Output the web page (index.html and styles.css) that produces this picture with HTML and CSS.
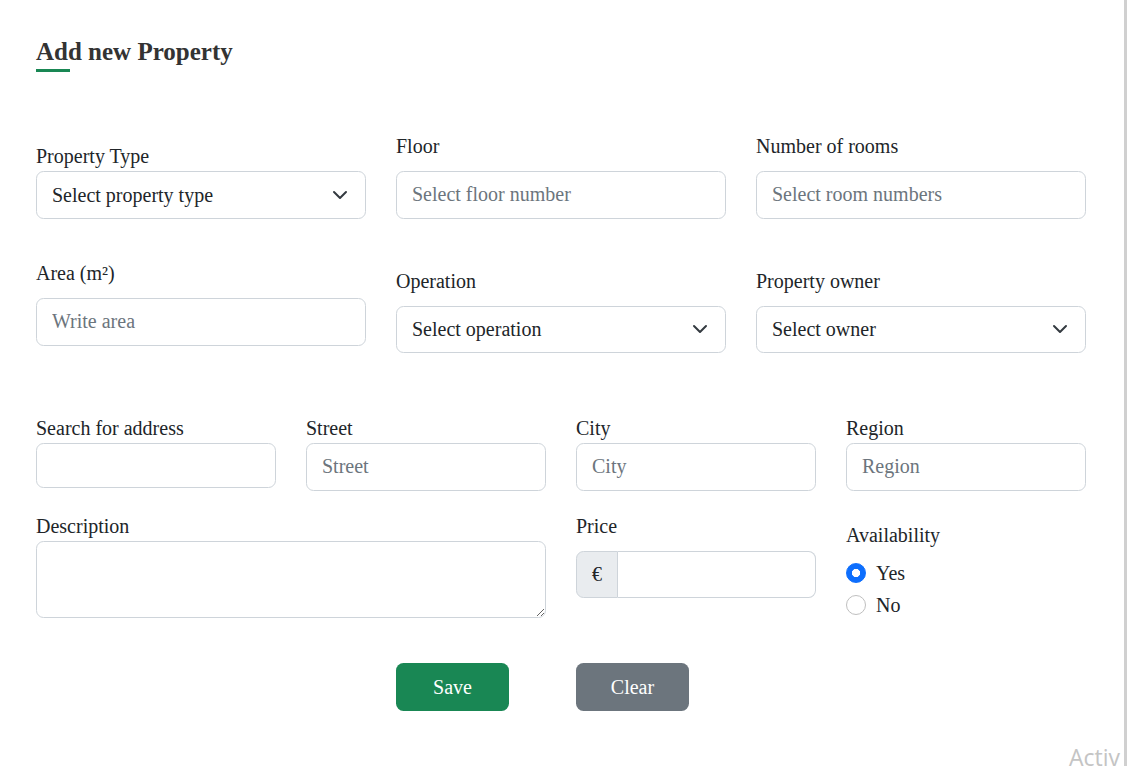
FILE: index.html
```html
<!DOCTYPE html>
<html lang="en">
<head>
<meta charset="utf-8">
<title>Add new Property</title>
<link rel="stylesheet" href="styles.css">
</head>
<body>
<div class="page">
  <main class="container">
    <h5 class="title">Add new Property</h5>
    <div class="title-bar"></div>

    <div class="row cols-3 row-1">
      <div class="field">
        <label class="lbl lbl-top">Property Type</label>
        <div class="select"><span>Select property type</span>
          <svg width="16" height="12" viewBox="0 0 16 12"><path d="M2 3l6 6 6-6" fill="none" stroke="#343a40" stroke-width="2" stroke-linecap="round" stroke-linejoin="round"/></svg>
        </div>
      </div>
      <div class="field">
        <label class="lbl lbl-mb">Floor</label>
        <input class="input" type="text" placeholder="Select floor number">
      </div>
      <div class="field">
        <label class="lbl lbl-mb">Number of rooms</label>
        <input class="input" type="text" placeholder="Select room numbers">
      </div>
    </div>

    <div class="row cols-3 row-2">
      <div class="field">
        <label class="lbl lbl-mb">Area (m²)</label>
        <input class="input input-48" type="text" placeholder="Write area">
      </div>
      <div class="field push-8">
        <label class="lbl lbl-mb">Operation</label>
        <div class="select"><span>Select operation</span>
          <svg width="16" height="12" viewBox="0 0 16 12"><path d="M2 3l6 6 6-6" fill="none" stroke="#343a40" stroke-width="2" stroke-linecap="round" stroke-linejoin="round"/></svg>
        </div>
      </div>
      <div class="field push-8">
        <label class="lbl lbl-mb">Property owner</label>
        <div class="select"><span>Select owner</span>
          <svg width="16" height="12" viewBox="0 0 16 12"><path d="M2 3l6 6 6-6" fill="none" stroke="#343a40" stroke-width="2" stroke-linecap="round" stroke-linejoin="round"/></svg>
        </div>
      </div>
    </div>

    <div class="row cols-4 row-3">
      <div class="field">
        <label class="lbl">Search for address</label>
        <input class="input input-45" type="text">
      </div>
      <div class="field">
        <label class="lbl">Street</label>
        <input class="input" type="text" placeholder="Street">
      </div>
      <div class="field">
        <label class="lbl">City</label>
        <input class="input" type="text" placeholder="City">
      </div>
      <div class="field">
        <label class="lbl">Region</label>
        <input class="input" type="text" placeholder="Region">
      </div>
    </div>

    <div class="row cols-4 row-4">
      <div class="field span-2">
        <label class="lbl">Description</label>
        <textarea class="textarea"></textarea>
      </div>
      <div class="field">
        <label class="lbl lbl-mb">Price</label>
        <div class="input-group">
          <span class="addon">€</span>
          <input class="input group-input" type="text">
        </div>
      </div>
      <div class="field push-9">
        <label class="lbl">Availability</label>
        <div class="checks">
          <label class="check"><input class="radio" type="radio" name="av" checked> Yes</label>
          <label class="check"><input class="radio" type="radio" name="av"> No</label>
        </div>
      </div>
    </div>

    <div class="actions">
      <button class="btn btn-save" type="button">Save</button>
      <button class="btn btn-clear" type="button">Clear</button>
    </div>
  </main>
  <div class="watermark">Activ</div>
</div>
</body>
</html>
```

FILE: styles.css
```css
* { box-sizing: border-box; }

html, body {
  margin: 0;
  padding: 0;
  background: #fff;
}

body {
  font-family: "Liberation Serif", "Times New Roman", serif;
  font-size: 20px;
  line-height: 1.5;
  color: #212529;
}

.page {
  position: relative;
  width: 1127px;
  height: 766px;
  overflow: hidden;
  border-right: 3px solid #d0d0d0;
}

.container {
  width: 1124px;
  padding: 37px 38px 0 36px;
}

.title {
  margin: 0;
  font-size: 25px;
  line-height: 30px;
  font-weight: 700;
  color: #333;
}

.title-bar {
  width: 34px;
  height: 3px;
  margin-top: 2px;
  background: #198754;
}

.row {
  display: grid;
  column-gap: 30px;
  align-items: start;
}

.cols-3 { grid-template-columns: repeat(3, 330px); }
.cols-4 { grid-template-columns: repeat(4, 240px); }
.span-2 { grid-column: span 2; }

.row-1 { margin-top: 59px; }
.row-2 { margin-top: 39px; }
.row-3 { margin-top: 60px; }
.row-4 { margin-top: 20px; }

.field {
  display: flex;
  flex-direction: column;
}

.push-8 { padding-top: 8px; }
.push-9 { padding-top: 9px; }

.lbl {
  display: block;
  line-height: 30px;
}

.lbl-mb { margin-bottom: 10px; }
.lbl-top { margin-top: 10px; }

.input,
.select,
.textarea {
  width: 100%;
  height: 47.5px;
  padding: 7.5px 15px;
  font-family: inherit;
  font-size: 20px;
  line-height: 30px;
  color: #212529;
  background: #fff;
  border: 1px solid #ced4da;
  border-radius: 7.5px;
  outline: none;
}

.input::placeholder { color: #6c757d; }

.input-48 { height: 48px; }
.input-45 { height: 45px; }

.select {
  display: flex;
  align-items: center;
  justify-content: space-between;
  padding-right: 17px;
}

.select svg { display: block; }

.textarea {
  height: 77px;
  resize: vertical;
  display: block;
}

.input-group {
  display: flex;
  height: 47.5px;
}

.addon {
  width: 42px;
  display: flex;
  align-items: center;
  justify-content: center;
  background: #e9ecef;
  border: 1px solid #ced4da;
  border-radius: 7.5px 0 0 7.5px;
  color: #212529;
}

.group-input {
  flex: 1;
  border-left: 0;
  border-radius: 0 7.5px 7.5px 0;
}

.checks {
  margin-top: 8px;
}

.check {
  display: flex;
  align-items: center;
  gap: 10px;
  height: 30px;
  margin-bottom: 2.5px;
}

.radio {
  appearance: none;
  -webkit-appearance: none;
  width: 20px;
  height: 20px;
  margin: 0;
  border-radius: 50%;
  border: 1px solid #bfbfbf;
  background: #fff;
}

.radio:checked {
  border-color: #0d6efd;
  background: radial-gradient(circle, #fff 0 3.8px, #0d6efd 4.4px);
}

.actions {
  display: flex;
  gap: 67px;
  margin-top: 40px;
  padding-left: 360px;
}

.btn {
  width: 113px;
  height: 48px;
  border: 0;
  border-radius: 7.5px;
  font-family: inherit;
  font-size: 20px;
  line-height: 30px;
  color: #fff;
}

.btn-save { background: #198754; }
.btn-clear { background: #6c757d; }

.watermark {
  position: absolute;
  left: 1069px;
  top: 742px;
  font-family: "Open Sans", "Noto Sans", sans-serif;
  font-size: 23px;
  line-height: 30px;
  color: #c4c4c4;
  white-space: nowrap;
}
```
